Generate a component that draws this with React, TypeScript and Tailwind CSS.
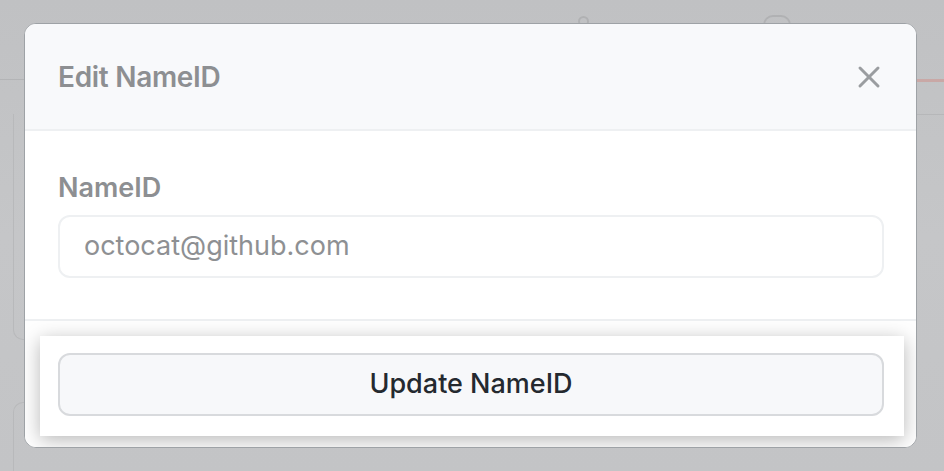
import { X } from 'lucide-react';

export default function App() {
  return (
    <div
      className="relative w-[944px] h-[471px] overflow-hidden bg-gradient-to-b from-[#c0c1c3] via-[#c5c6c8] to-[#c3c4c6]"
      style={{ fontFamily: 'Inter, "Noto Sans", sans-serif' }}
    >
      {/* Dimmed page behind the dialog */}
      <div className="absolute inset-0 pointer-events-none">
        <div className="absolute left-0 top-[79px] w-[30px] h-px bg-[#b3b4b6]" />
        <div className="absolute right-0 top-[79px] w-[32px] h-[3px] bg-[#c9a8a6]" />
        <div className="absolute right-0 top-[114px] w-[32px] h-px bg-[#b6b7b9]" />
        <div className="absolute left-[13px] top-[114px] w-[40px] h-[226px] rounded-bl-[10px] border-l border-b border-[#b8b9bb]" />
        <div className="absolute left-[13px] top-[402px] w-[40px] h-[80px] rounded-tl-[10px] border-l border-t border-[#b8b9bb]" />
        <div className="absolute left-[578px] top-[16px] w-[11px] h-[11px] rounded-full border-2 border-[#b0b1b3]" />
        <div className="absolute left-[763px] top-[15px] w-[28px] h-[10px] border-t-2 border-x-2 border-[#b0b1b3] rounded-t-[14px]" />
      </div>

      <div className="relative pt-[23px] pl-[24px]">
        {/* Dialog */}
        <div className="w-[893px] h-[425px] flex flex-col rounded-[12px] overflow-hidden border border-[#9ea2a6] bg-white">
          {/* Header */}
          <div className="h-[107px] shrink-0 flex items-center justify-between pl-[33px] pr-[29px] bg-[#f8f9fb] border-b-2 border-[#eef0f2]">
            <h2 className="text-[28px] font-semibold text-[#8d8f92] tracking-[-0.3px]">Edit NameID</h2>
            <X className="w-[36px] h-[36px] text-[#9a9da0]" strokeWidth={2} />
          </div>

          {/* Body */}
          <div className="shrink-0 pt-[40px] pb-[41px] pl-[33px] pr-[32px] border-b-2 border-[#eef0f2]">
            <label className="block text-[27px] leading-[33px] font-semibold text-[#8d8f92]">NameID</label>
            <div className="mt-[11px] h-[63px] flex items-center px-[24px] rounded-[12px] border-2 border-[#eef0f2] bg-white">
              <span className="text-[27px] text-[#8e9093]">octocat@github.com</span>
            </div>
          </div>

          {/* Footer */}
          <div className="flex-1 bg-[#fefefe] pt-[15px] pl-[15px] pr-[12px]">
            <div className="h-[100px] pt-[17px] pl-[18px] pr-[20px] bg-white shadow-[0_4px_18px_rgba(0,0,0,0.28)]">
              <button className="w-full h-[63px] flex items-center justify-center rounded-[12px] border-2 border-[#d8dadd] bg-[#f7f8fa] text-[27px] font-medium text-[#24292f]">
                Update NameID
              </button>
            </div>
          </div>
        </div>
      </div>
    </div>
  );
}
